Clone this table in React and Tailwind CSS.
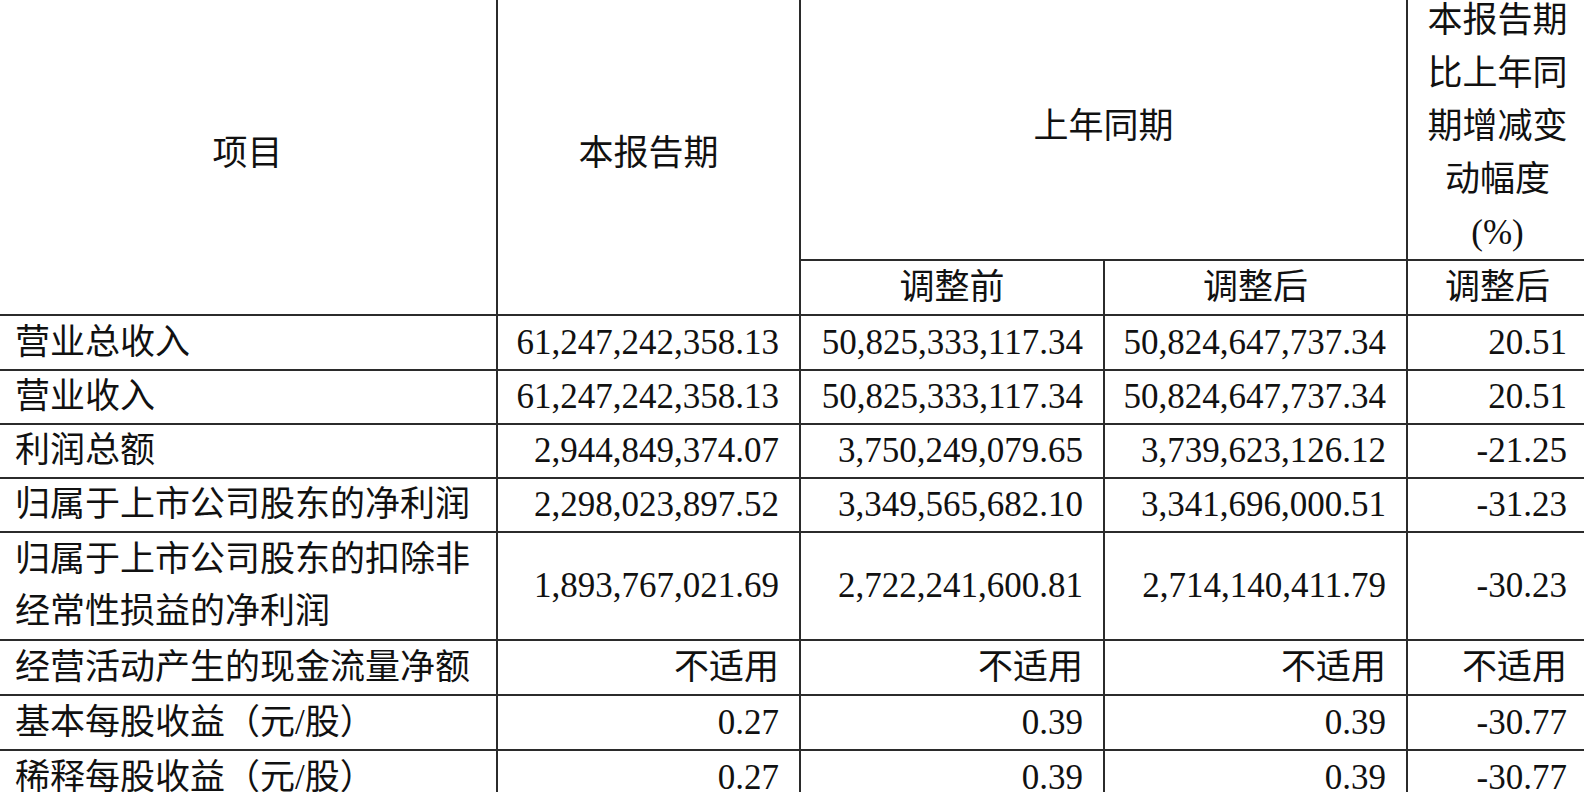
const ROWS = [
  { name: '营业总收入', cur: '61,247,242,358.13', before: '50,825,333,117.34', after: '50,824,647,737.34', pct: '20.51', h: 'h-[55px]' },
  { name: '营业收入', cur: '61,247,242,358.13', before: '50,825,333,117.34', after: '50,824,647,737.34', pct: '20.51', h: 'h-[54px]' },
  { name: '利润总额', cur: '2,944,849,374.07', before: '3,750,249,079.65', after: '3,739,623,126.12', pct: '-21.25', h: 'h-[54px]' },
  { name: '归属于上市公司股东的净利润', cur: '2,298,023,897.52', before: '3,349,565,682.10', after: '3,341,696,000.51', pct: '-31.23', h: 'h-[54px]' },
  { name: ['归属于上市公司股东的扣除非', '经常性损益的净利润'], cur: '1,893,767,021.69', before: '2,722,241,600.81', after: '2,714,140,411.79', pct: '-30.23', h: 'h-[108px]' },
  { name: '经营活动产生的现金流量净额', cur: '不适用', before: '不适用', after: '不适用', pct: '不适用', h: 'h-[55px]' },
  { name: '基本每股收益（元/股）', cur: '0.27', before: '0.39', after: '0.39', pct: '-30.77', h: 'h-[55px]' },
  { name: '稀释每股收益（元/股）', cur: '0.27', before: '0.39', after: '0.39', pct: '-30.77', h: 'h-[55px]' },
]

const cell = 'border-2 border-[#2b2b2b] p-0 align-middle'

export default function App() {
  return (
    <div className="w-[1584px] h-[792px] overflow-hidden bg-white text-[#111]"
      style={{ fontFamily: '"Liberation Serif", "Noto Sans CJK SC", serif' }}>
      <table className="table-fixed border-collapse text-[35px] leading-[52px] mt-[-8px] ml-[-3px] w-[1594px]">
        <colgroup>
          <col className="w-[499px]" />
          <col className="w-[303px]" />
          <col className="w-[304px]" />
          <col className="w-[303px]" />
          <col className="w-[185px]" />
        </colgroup>
        <thead>
          <tr className="h-[263px]">
            <th rowSpan={2} className={`${cell} font-normal text-center`}>项目</th>
            <th rowSpan={2} className={`${cell} font-normal text-center`}>本报告期</th>
            <th colSpan={2} className={`${cell} font-normal text-center`}>上年同期</th>
            <th className={`${cell} font-normal text-center leading-[53px] pr-[4px]`}>
              本报告期<br />比上年同<br />期增减变<br />动幅度<br />(%)
            </th>
          </tr>
          <tr className="h-[55px]">
            <th className={`${cell} font-normal text-center`}>调整前</th>
            <th className={`${cell} font-normal text-center`}>调整后</th>
            <th className={`${cell} font-normal text-center pr-[4px]`}>调整后</th>
          </tr>
        </thead>
        <tbody>
          {ROWS.map((r, i) => (
            <tr key={i} className={r.h}>
              <td className={`${cell} text-left pl-[16px]`}>
                {Array.isArray(r.name) ? <>{r.name[0]}<br />{r.name[1]}</> : r.name}
              </td>
              <td className={`${cell} text-right pr-[20px]`}>{r.cur}</td>
              <td className={`${cell} text-right pr-[20px]`}>{r.before}</td>
              <td className={`${cell} text-right pr-[20px]`}>{r.after}</td>
              <td className={`${cell} text-right pr-[24px]`}>{r.pct}</td>
            </tr>
          ))}
        </tbody>
      </table>
    </div>
  )
}
